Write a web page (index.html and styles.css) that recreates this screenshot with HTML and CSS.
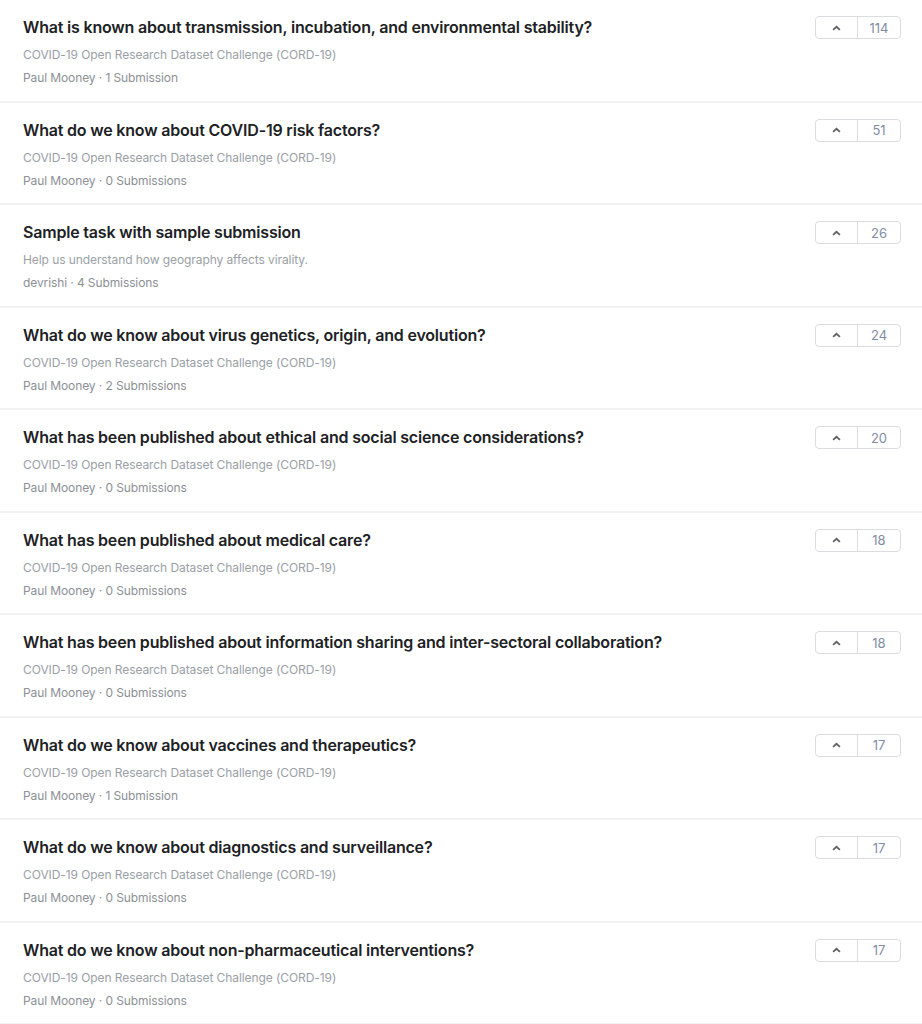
FILE: index.html
```html
<!DOCTYPE html>
<html lang="en">
<head>
<meta charset="utf-8">
<title>Tasks</title>
<link rel="stylesheet" href="styles.css">
</head>
<body>
<ul class="task-list">
  <li class="task">
    <div class="task-body">
      <div class="task-title">What is known about transmission, incubation, and environmental stability?</div>
      <div class="task-sub">COVID-19 Open Research Dataset Challenge (CORD-19)</div>
      <div class="task-meta">Paul Mooney · 1 Submission</div>
    </div>
    <div class="vote"><span class="vote-up"><svg viewBox="0 0 10 6" width="9" height="6"><path d="M1.2 5 L5 1.6 L8.8 5" fill="none" stroke="#5f6368" stroke-width="2"/></svg></span><span class="vote-count">114</span></div>
  </li>
  <li class="task">
    <div class="task-body">
      <div class="task-title">What do we know about COVID-19 risk factors?</div>
      <div class="task-sub">COVID-19 Open Research Dataset Challenge (CORD-19)</div>
      <div class="task-meta">Paul Mooney · 0 Submissions</div>
    </div>
    <div class="vote"><span class="vote-up"><svg viewBox="0 0 10 6" width="9" height="6"><path d="M1.2 5 L5 1.6 L8.8 5" fill="none" stroke="#5f6368" stroke-width="2"/></svg></span><span class="vote-count">51</span></div>
  </li>
  <li class="task">
    <div class="task-body">
      <div class="task-title">Sample task with sample submission</div>
      <div class="task-sub">Help us understand how geography affects virality.</div>
      <div class="task-meta">devrishi · 4 Submissions</div>
    </div>
    <div class="vote"><span class="vote-up"><svg viewBox="0 0 10 6" width="9" height="6"><path d="M1.2 5 L5 1.6 L8.8 5" fill="none" stroke="#5f6368" stroke-width="2"/></svg></span><span class="vote-count">26</span></div>
  </li>
  <li class="task">
    <div class="task-body">
      <div class="task-title">What do we know about virus genetics, origin, and evolution?</div>
      <div class="task-sub">COVID-19 Open Research Dataset Challenge (CORD-19)</div>
      <div class="task-meta">Paul Mooney · 2 Submissions</div>
    </div>
    <div class="vote"><span class="vote-up"><svg viewBox="0 0 10 6" width="9" height="6"><path d="M1.2 5 L5 1.6 L8.8 5" fill="none" stroke="#5f6368" stroke-width="2"/></svg></span><span class="vote-count">24</span></div>
  </li>
  <li class="task">
    <div class="task-body">
      <div class="task-title">What has been published about ethical and social science considerations?</div>
      <div class="task-sub">COVID-19 Open Research Dataset Challenge (CORD-19)</div>
      <div class="task-meta">Paul Mooney · 0 Submissions</div>
    </div>
    <div class="vote"><span class="vote-up"><svg viewBox="0 0 10 6" width="9" height="6"><path d="M1.2 5 L5 1.6 L8.8 5" fill="none" stroke="#5f6368" stroke-width="2"/></svg></span><span class="vote-count">20</span></div>
  </li>
  <li class="task">
    <div class="task-body">
      <div class="task-title">What has been published about medical care?</div>
      <div class="task-sub">COVID-19 Open Research Dataset Challenge (CORD-19)</div>
      <div class="task-meta">Paul Mooney · 0 Submissions</div>
    </div>
    <div class="vote"><span class="vote-up"><svg viewBox="0 0 10 6" width="9" height="6"><path d="M1.2 5 L5 1.6 L8.8 5" fill="none" stroke="#5f6368" stroke-width="2"/></svg></span><span class="vote-count">18</span></div>
  </li>
  <li class="task">
    <div class="task-body">
      <div class="task-title">What has been published about information sharing and inter-sectoral collaboration?</div>
      <div class="task-sub">COVID-19 Open Research Dataset Challenge (CORD-19)</div>
      <div class="task-meta">Paul Mooney · 0 Submissions</div>
    </div>
    <div class="vote"><span class="vote-up"><svg viewBox="0 0 10 6" width="9" height="6"><path d="M1.2 5 L5 1.6 L8.8 5" fill="none" stroke="#5f6368" stroke-width="2"/></svg></span><span class="vote-count">18</span></div>
  </li>
  <li class="task">
    <div class="task-body">
      <div class="task-title">What do we know about vaccines and therapeutics?</div>
      <div class="task-sub">COVID-19 Open Research Dataset Challenge (CORD-19)</div>
      <div class="task-meta">Paul Mooney · 1 Submission</div>
    </div>
    <div class="vote"><span class="vote-up"><svg viewBox="0 0 10 6" width="9" height="6"><path d="M1.2 5 L5 1.6 L8.8 5" fill="none" stroke="#5f6368" stroke-width="2"/></svg></span><span class="vote-count">17</span></div>
  </li>
  <li class="task">
    <div class="task-body">
      <div class="task-title">What do we know about diagnostics and surveillance?</div>
      <div class="task-sub">COVID-19 Open Research Dataset Challenge (CORD-19)</div>
      <div class="task-meta">Paul Mooney · 0 Submissions</div>
    </div>
    <div class="vote"><span class="vote-up"><svg viewBox="0 0 10 6" width="9" height="6"><path d="M1.2 5 L5 1.6 L8.8 5" fill="none" stroke="#5f6368" stroke-width="2"/></svg></span><span class="vote-count">17</span></div>
  </li>
  <li class="task">
    <div class="task-body">
      <div class="task-title">What do we know about non-pharmaceutical interventions?</div>
      <div class="task-sub">COVID-19 Open Research Dataset Challenge (CORD-19)</div>
      <div class="task-meta">Paul Mooney · 0 Submissions</div>
    </div>
    <div class="vote"><span class="vote-up"><svg viewBox="0 0 10 6" width="9" height="6"><path d="M1.2 5 L5 1.6 L8.8 5" fill="none" stroke="#5f6368" stroke-width="2"/></svg></span><span class="vote-count">17</span></div>
  </li>
</ul>
</body>
</html>
```

FILE: styles.css
```css
html, body {
  margin: 0;
  padding: 0;
  background: #ffffff;
}

body {
  font-family: Inter, "Noto Sans", "Liberation Sans", sans-serif;
  color: #202124;
}

.task-list {
  list-style: none;
  margin: 0;
  padding: 0;
}

.task {
  display: flex;
  justify-content: space-between;
  align-items: flex-start;
  box-sizing: border-box;
  height: 102.5px;
  padding: 15px 21px 0 23px;
  border-bottom: 2px solid #f1f1f1;
}

.task-body {
  display: flex;
  flex-direction: column;
}

.task-title {
  font-size: 16px;
  line-height: 24px;
  font-weight: 600;
  letter-spacing: -0.19px;
  color: #202124;
}

.task-sub {
  margin-top: 6px;
  font-size: 12px;
  line-height: 20px;
  letter-spacing: -0.08px;
  color: #9aa0a6;
}

.task-meta {
  margin-top: 3px;
  font-size: 12px;
  line-height: 20px;
  letter-spacing: -0.1px;
  color: #8c9095;
}

.vote {
  display: flex;
  margin-top: 1px;
  height: 23px;
  box-sizing: border-box;
  border: 1px solid #dadce0;
  border-radius: 4px;
  flex-shrink: 0;
}

.vote-up {
  width: 41px;
  display: flex;
  align-items: center;
  justify-content: center;
  border-right: 1px solid #dadce0;
}

.vote-count {
  width: 42px;
  display: flex;
  align-items: center;
  justify-content: center;
  font-size: 13px;
  color: #7f8ca3;
}
```
